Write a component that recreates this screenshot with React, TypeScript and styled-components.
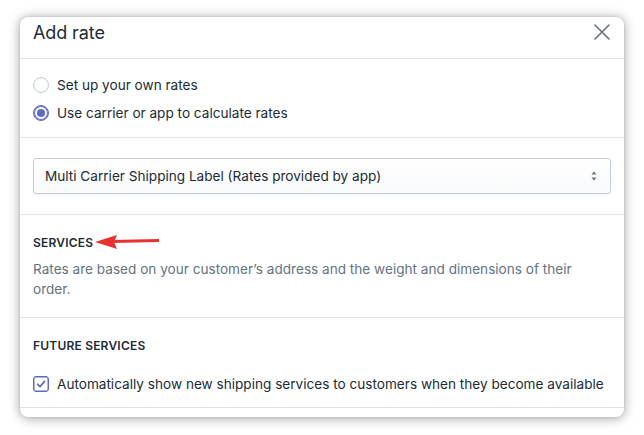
import styled, { createGlobalStyle } from "styled-components";

const GlobalStyle = createGlobalStyle`
  html, body {
    margin: 0;
    padding: 0;
    background: #ffffff;
  }
  body {
    font-family: Inter, "Noto Sans", "Liberation Sans", sans-serif;
    color: #212b36;
    -webkit-font-smoothing: antialiased;
  }
`;

const Page = styled.div`
  width: 644px;
  height: 435px;
  padding: 17px 20px 0;
  box-sizing: border-box;
`;

const Modal = styled.div`
  width: 604px;
  height: 400px;
  background: #ffffff;
  border-radius: 8px;
  box-shadow: 0 1px 12px rgba(0, 0, 0, 0.38), 0 0 2px rgba(0, 0, 0, 0.15);
  overflow: hidden;
  display: flex;
  flex-direction: column;
`;

const Header = styled.div`
  height: 41px;
  display: flex;
  align-items: center;
  justify-content: space-between;
  padding: 0 13px;
  border-bottom: 1px solid #dfe3e8;
`;

const Title = styled.h2`
  margin: -11px 0 0;
  font-size: 18px;
  font-weight: 400;
  color: #212b36;
  letter-spacing: -0.1px;
`;

const CloseButton = styled.button`
  border: 0;
  background: none;
  padding: 0;
  width: 18px;
  height: 18px;
  display: flex;
  align-items: center;
  justify-content: center;
  margin-top: -11px;
  cursor: pointer;
`;

const Section = styled.div<{ pad: string }>`
  padding: ${(p) => p.pad};
  border-bottom: 1px solid #dfe3e8;
  display: flex;
  flex-direction: column;
`;

const ChoiceRow = styled.label`
  height: 28px;
  display: flex;
  align-items: center;
  gap: 8px;
  font-size: 13.6px;
  white-space: nowrap;
  color: #212b36;
`;

const Radio = styled.span<{ checked?: boolean }>`
  width: 14px;
  height: 14px;
  border-radius: 50%;
  border: 1px solid ${(p) => (p.checked ? "#5c6ac4" : "#c4cdd5")};
  background: ${(p) => (p.checked ? "#ffffff" : "linear-gradient(#ffffff, #f9fafb)")};
  display: flex;
  align-items: center;
  justify-content: center;
  box-shadow: 0 0 0 1px ${(p) => (p.checked ? "#5c6ac4" : "transparent")} inset;
  flex-shrink: 0;
  &::after {
    content: "";
    display: ${(p) => (p.checked ? "block" : "none")};
    width: 8px;
    height: 8px;
    border-radius: 50%;
    background: #5c6ac4;
  }
`;

const Checkbox = styled.span`
  width: 14px;
  height: 14px;
  border-radius: 3px;
  border: 1px solid #5c6ac4;
  box-shadow: 0 0 0 0.5px #5c6ac4 inset;
  display: flex;
  align-items: center;
  justify-content: center;
  flex-shrink: 0;
`;

const Select = styled.div`
  height: 36px;
  box-sizing: border-box;
  border: 1px solid #c4cdd5;
  border-radius: 3px;
  background: linear-gradient(#ffffff, #f9fafb);
  box-shadow: 0 1px 0 rgba(22, 29, 37, 0.05);
  display: flex;
  align-items: center;
  justify-content: space-between;
  padding: 0 12px 0 11px;
  font-size: 13.6px;
  color: #212b36;
`;

const Heading = styled.div`
  height: 20px;
  display: flex;
  align-items: center;
  gap: 2px;
  font-size: 12px;
  font-weight: 600;
  letter-spacing: 0.2px;
  text-transform: uppercase;
  color: #212b36;
`;

const Description = styled.p`
  margin: 7px 0 0;
  font-size: 13.6px;
  line-height: 20px;
  color: #637381;
`;

const CheckRow = styled(ChoiceRow)`
  height: 20px;
  margin-top: 19px;
`;

const FooterStub = styled.div`
  flex: 1;
`;

const ArrowIcon = () => (
  <svg width="66" height="14" viewBox="0 0 66 14">
    <line x1="16" y1="6.5" x2="64" y2="5.5" stroke="#e8322f" strokeWidth="3" />
    <polygon points="0,7 22,0 19,7 22,14" fill="#e8322f" />
  </svg>
);

export default function App() {
  return (
    <>
      <GlobalStyle />
      <Page>
        <Modal>
          <Header>
            <Title>Add rate</Title>
            <CloseButton aria-label="Close">
              <svg width="16" height="16" viewBox="0 0 16 16">
                <path d="M1 1 L15 15 M15 1 L1 15" stroke="#637381" strokeWidth="1.6" strokeLinecap="round" />
              </svg>
            </CloseButton>
          </Header>

          <Section pad="12px 13px 10px">
            <ChoiceRow>
              <Radio />
              Set up your own rates
            </ChoiceRow>
            <ChoiceRow>
              <Radio checked />
              Use carrier or app to calculate rates
            </ChoiceRow>
          </Section>

          <Section pad="20px 13px 20px">
            <Select>
              <span>Multi Carrier Shipping Label (Rates provided by app)</span>
              <svg width="8" height="12" viewBox="0 0 8 12">
                <path d="M4 1.5 L6.5 4.5 H1.5 Z M4 10.5 L6.5 7.5 H1.5 Z" fill="#637381" />
              </svg>
            </Select>
          </Section>

          <Section pad="17px 13px 18px">
            <Heading>
              Services
              <ArrowIcon />
            </Heading>
            <Description>
              Rates are based on your customer’s address and the weight and dimensions of their order.
            </Description>
          </Section>

          <Section pad="17px 13px 13px">
            <Heading>Future services</Heading>
            <CheckRow>
              <Checkbox>
                <svg width="12" height="12" viewBox="0 0 12 12">
                  <path d="M2.5 6.2 L5 8.6 L9.6 3.4" fill="none" stroke="#5c6ac4" strokeWidth="1.6" strokeLinecap="round" strokeLinejoin="round" />
                </svg>
              </Checkbox>
              Automatically show new shipping services to customers when they become available
            </CheckRow>
          </Section>

          <FooterStub />
        </Modal>
      </Page>
    </>
  );
}
